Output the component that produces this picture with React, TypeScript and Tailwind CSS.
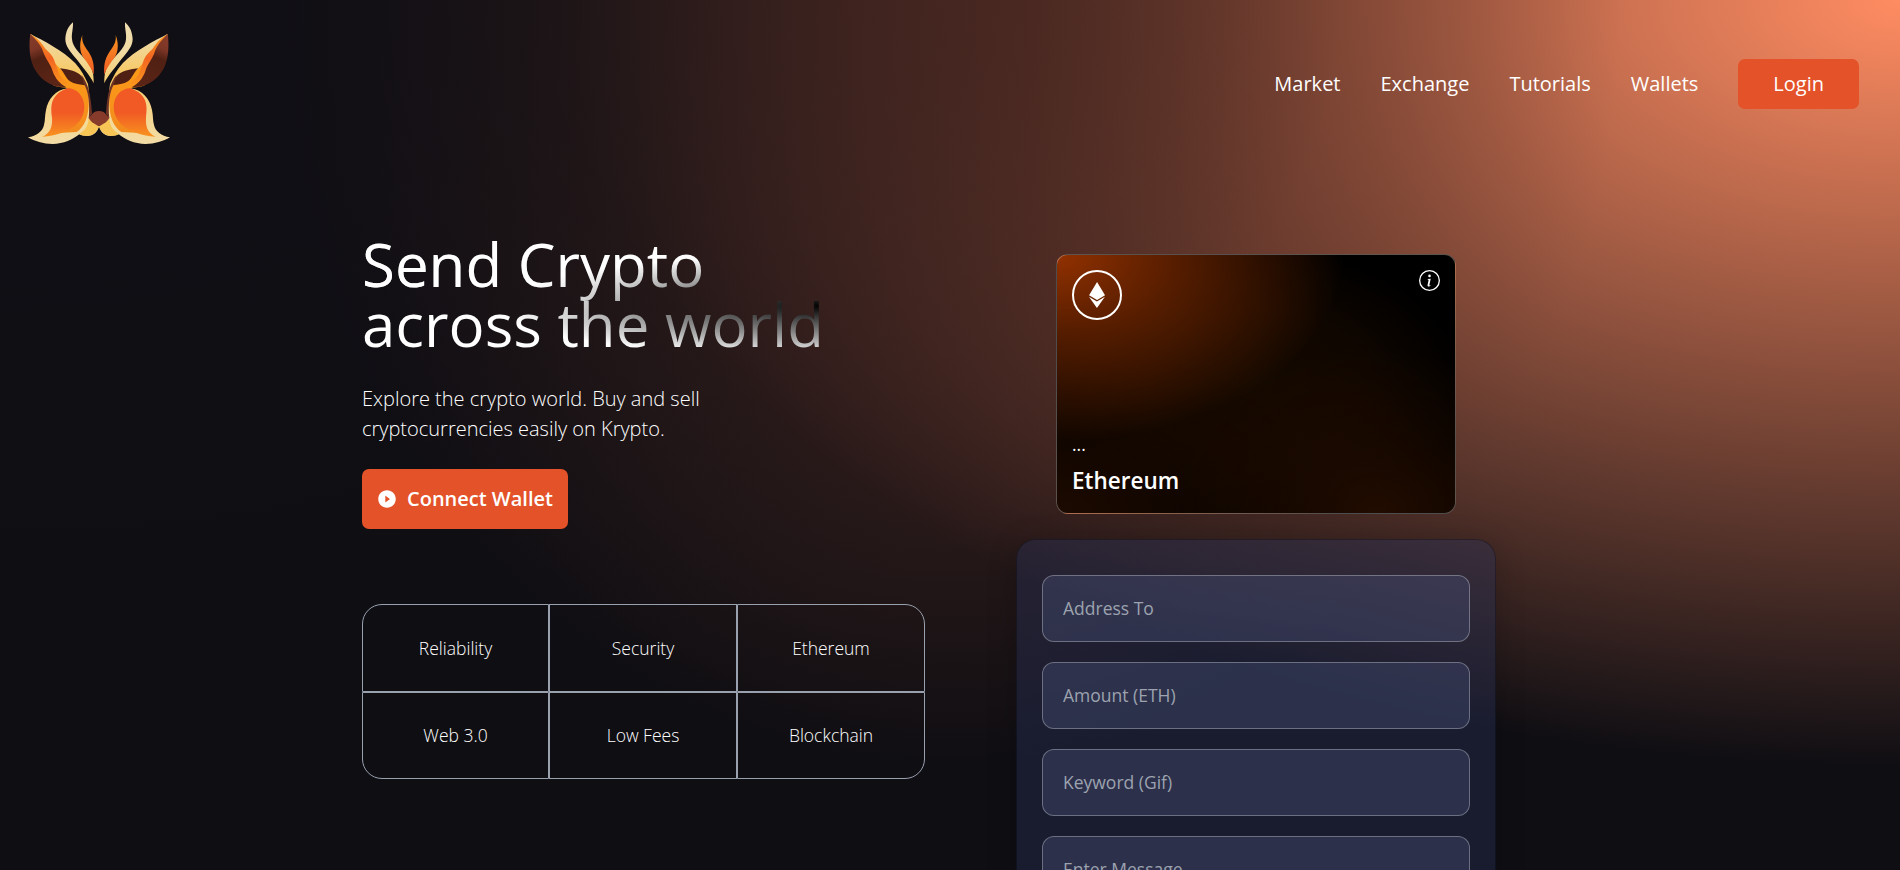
import React from "react";
import { SiEthereum } from "react-icons/si";
import { BsInfoCircle } from "react-icons/bs";
import { AiFillPlayCircle } from "react-icons/ai";

const links = ["Market", "Exchange", "Tutorials", "Wallets"];
const fields = ["Address To", "Amount (ETH)", "Keyword (Gif)", "Enter Message"];
const features = [
  { label: "Reliability", corner: "rounded-tl-[20px]" },
  { label: "Security", corner: "" },
  { label: "Ethereum", corner: "rounded-tr-[20px]" },
  { label: "Web 3.0", corner: "rounded-bl-[20px]" },
  { label: "Low Fees", corner: "" },
  { label: "Blockchain", corner: "rounded-br-[20px]" },
];

function LogoHalf() {
  return (
    <g>
      <path d="M61 72C100 92 160 122 196 160C214 180 224 200 234 222L244 312L236 318L267 348C262 370 246 378 232 378C224 378 214 376 208 373C190 388 160 402 128 402C100 402 74 394 54 382C80 378 98 364 102 345C106 330 104 318 108 300C114 268 136 240 172 235L128 170Z" fill="url(#cream)" />
      <path d="M268 348C260 368 246 378 230 378C222 378 214 376 208 373C222 360 230 345 234 322Z" fill="#f6c556" />
      <path d="M61 72C60 74 96 96 112 130C122 152 138 162 150 176C170 186 200 190 216 206C226 220 234 240 236 270C238 320 222 352 200 366L128 370L128 300L172 235L150 224L90 150Z" fill="url(#amber)" />
      <path d="M238 270C240 316 226 352 204 370C222 368 234 350 237 322C240 300 240 284 238 270Z" fill="#f4dc9e" />
      <path d="M172 235C200 234 222 258 223 290C222 340 180 372 97 380C122 370 128 348 126 322C122 290 120 254 172 235Z" fill="url(#body)" />
      <path d="M61 72C84 86 92 96 106 116C134 140 134 156 142 178C148 202 168 216 186 228C176 234 148 234 130 226L92 150Z" fill="url(#ear)" />
      <path d="M61 72C84 96 94 106 102 132C110 152 122 162 128 184C136 206 150 222 168 231C120 234 88 204 72 174C58 144 56 104 61 72Z" fill="url(#brown)" />
      <path d="M150 175C178 178 202 184 214 198C222 208 226 216 228 226C210 224 192 222 180 214C166 204 164 188 150 175Z" fill="#4f2013" />
      <path d="M214 194C234 220 242 250 246 310L236 326C240 284 236 246 222 222Z" fill="#6d3223" />
      <path d="M189 37C190 58 184 70 186 88C188 110 206 128 228 150C246 170 252 190 251 220C240 196 224 180 200 148C180 124 166 108 166 86C168 62 176 48 189 37Z" fill="url(#horn)" />
      <path d="M217 75C214 96 224 110 236 126C250 148 253 166 251 194C242 170 232 160 220 142C208 124 208 98 217 75Z" fill="url(#flame)" />
    </g>
  );
}

function Logo() {
  return (
    <svg viewBox="0 0 540 450" className="ml-[10px] mt-[1px] h-[150px] w-[180px] shrink-0" aria-hidden="true">
      <defs>
        <linearGradient id="cream" x1="0" y1="0" x2="0" y2="1"><stop offset="0" stopColor="#efdcae" /><stop offset=".4" stopColor="#f8c75c" /><stop offset=".6" stopColor="#f6d283" /><stop offset="1" stopColor="#f2dca6" /></linearGradient>
        <linearGradient id="horn" x1="0" y1="0" x2="0" y2="1"><stop offset="0" stopColor="#eedcb0" /><stop offset=".5" stopColor="#f2dba2" /><stop offset="1" stopColor="#f6cd6c" /></linearGradient>
        <linearGradient id="amber" x1="0" y1="0" x2="0" y2="1"><stop offset="0" stopColor="#f57a1f" /><stop offset=".4" stopColor="#fc9a18" /><stop offset="1" stopColor="#f28a1e" /></linearGradient>
        <linearGradient id="body" x1="0" y1="0" x2="0" y2="1"><stop offset="0" stopColor="#f15a24" /><stop offset=".5" stopColor="#f15a24" /><stop offset="1" stopColor="#f8931f" /></linearGradient>
        <linearGradient id="ear" x1="0" y1="0" x2="0" y2="1"><stop offset="0" stopColor="#fb9a1c" /><stop offset=".45" stopColor="#f26522" /><stop offset="1" stopColor="#fb9a1c" /></linearGradient>
        <linearGradient id="brown" x1="0" y1="0" x2="0.3" y2="1"><stop offset="0" stopColor="#8a3d2b" /><stop offset=".3" stopColor="#7d3626" /><stop offset=".5" stopColor="#4f2013" /><stop offset="1" stopColor="#5a2416" /></linearGradient>
        <linearGradient id="flame" x1="0" y1="0" x2="0" y2="1"><stop offset="0" stopColor="#f79420" /><stop offset="1" stopColor="#f15a24" /></linearGradient>
      </defs>
      <LogoHalf />
      <g transform="translate(534 0) scale(-1 1)"><LogoHalf /></g>
      <path d="M236 322C248 316 246 304 267 303C288 304 286 316 298 322C294 336 280 342 267 349C254 342 240 336 236 322Z" fill="#873b2a" />
    </svg>
  );
}

export default function App() {
  return (
    <div className="h-[870px] w-full overflow-hidden bg-[#0f0e13] font-['Open_Sans','Noto_Sans',sans-serif]">
      <div className="h-[1085px] w-full bg-[#0f0e13] bg-[radial-gradient(at_0%_0%,hsla(253,16%,7%,1)_0,transparent_50%),radial-gradient(at_50%_0%,hsla(12,43%,25%,1)_0,transparent_50%),radial-gradient(at_100%_0%,#ff8c62_0,transparent_50%)]">
        <nav className="flex h-[168px] items-center justify-between pr-[41px]">
          <Logo />
          <ul className="flex items-center text-[20px] font-medium leading-[30px] text-white">
            {links.map((l) => (
              <li key={l} className="mr-10">{l}</li>
            ))}
            <li className="rounded-[7px] bg-[#e35228] px-[35px] py-[10px]">Login</li>
          </ul>
        </nav>
        <main className="flex items-start pl-[362px]">
          <section className="mt-[66px] w-[563px]">
            <h1 className="w-fit bg-white bg-[radial-gradient(at_4%_36%,hsla(0,0%,100%,1)_0,transparent_53%),radial-gradient(at_100%_60%,rgb(0,0,0)_0,transparent_50%)] bg-clip-text text-[60px] leading-[60px] text-transparent">
              Send Crypto <br /> across the world
            </h1>
            <p className="mt-[30px] text-[20px] font-light leading-[30px] text-white">
              Explore the crypto world. Buy and sell<br />cryptocurrencies easily on Krypto.
            </p>
            <button className="mt-[25px] flex h-[60px] w-[206px] items-center rounded-[7px] bg-[#e35228] pl-[15px] text-[20px] font-semibold text-white">
              <AiFillPlayCircle className="mr-[10px] size-5" />
              Connect Wallet
            </button>
            <div className="mt-[75px] grid grid-cols-[187px_188px_188px]">
              {features.map((f) => (
                <div key={f.label} className={`flex h-[87.5px] items-center justify-center border border-gray-400 text-[17.5px] font-light text-white ${f.corner}`}>
                  {f.label}
                </div>
              ))}
            </div>
          </section>
          <section className="ml-[91px] mt-[86px] flex w-[480px] flex-col items-center">
            <div className="flex h-[260px] w-[400px] flex-col justify-between rounded-[12px] border border-white/30 bg-black bg-[radial-gradient(at_0%_0%,#923100_0,transparent_51%),radial-gradient(at_80%_100%,#220c00_0,transparent_45%),radial-gradient(at_0%_100%,#1c0a00_0,transparent_50%),radial-gradient(at_50%_50%,#150900_0,#0f0600_40%,transparent_75%)] p-[15px] text-white">
              <div className="flex items-start justify-between">
                <div className="flex size-[50px] items-center justify-center rounded-full border-2 border-white">
                  <SiEthereum className="size-[26px]" />
                </div>
                <BsInfoCircle className="size-[21px]" />
              </div>
              <div>
                <p className="text-[17.5px] leading-[25px]">...</p>
                <p className="mt-[6px] text-[22.5px] font-semibold leading-[35px]">Ethereum</p>
              </div>
            </div>
            <div className="mt-[25px] flex h-[500px] w-[480px] flex-col gap-5 rounded-[20px] border border-black/30 bg-[rgb(39,51,89,0.4)] px-[25px] pt-[35px] shadow-[0_4px_30px_rgba(0,0,0,0.2)]">
              {fields.map((f) => (
                <input key={f} placeholder={f} className="h-[67px] w-full shrink-0 rounded-[12px] border border-white/30 bg-[#454d71]/43 px-5 pb-[2px] text-[17.5px] text-white outline-none placeholder:text-[#9ca3af]" />
              ))}
            </div>
          </section>
        </main>
      </div>
    </div>
  );
}
